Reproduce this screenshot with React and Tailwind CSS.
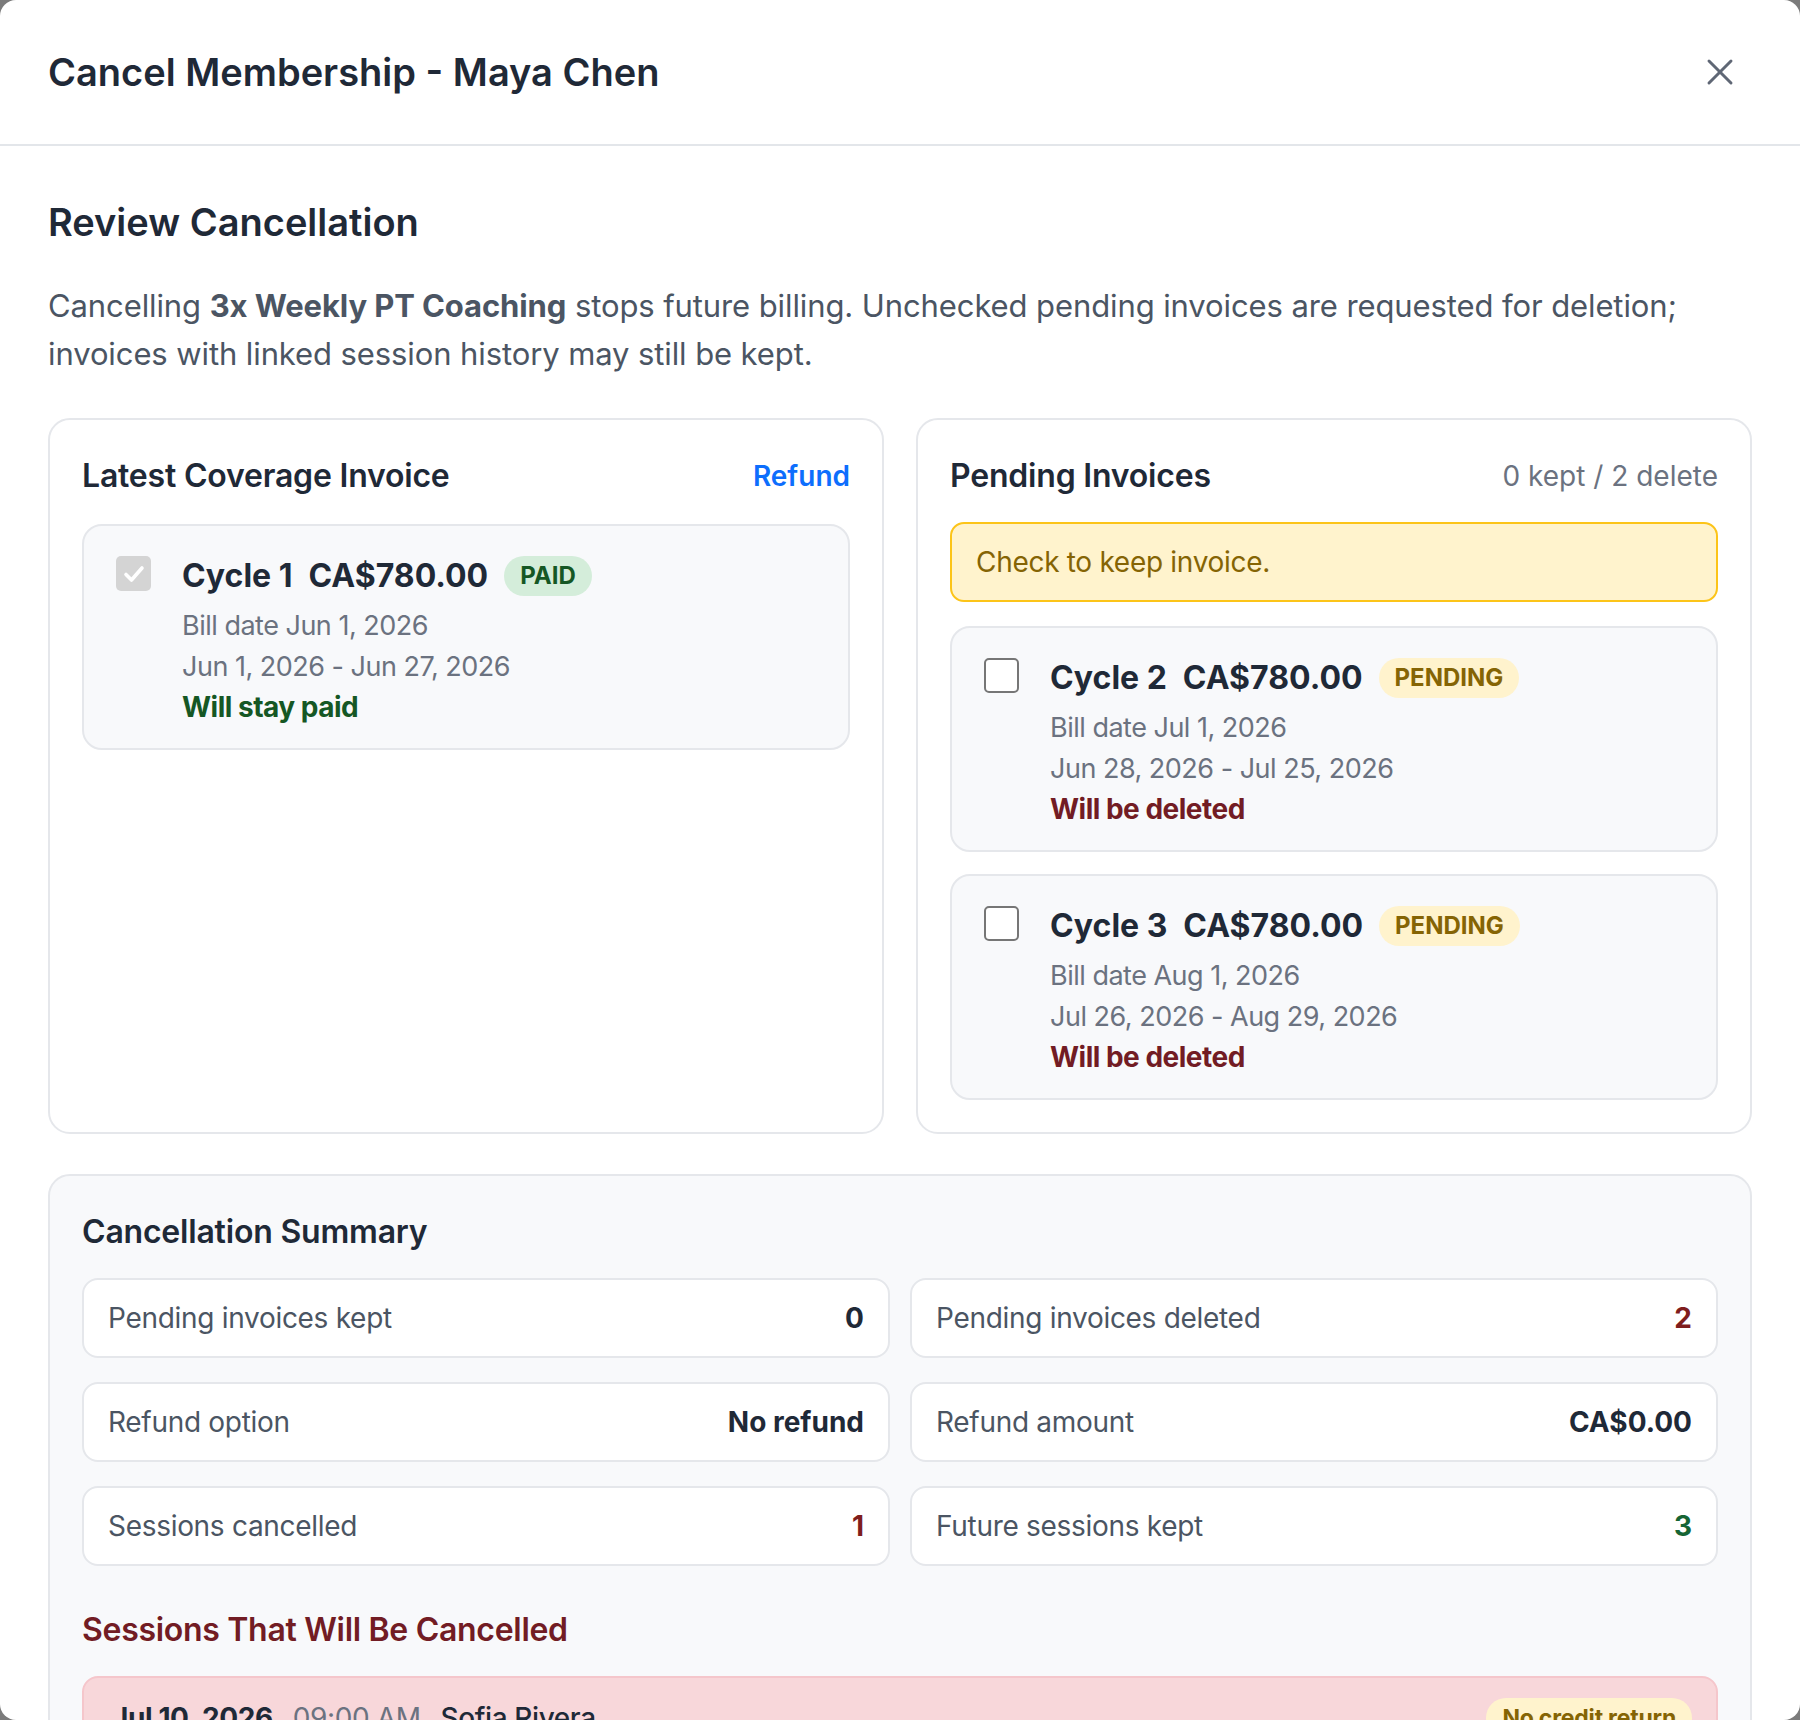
import React from "react";
import { X } from "lucide-react";

const pendingInvoices = [
  {
    cycle: 2,
    amount: "CA$780.00",
    billDate: "Jul 1, 2026",
    range: "Jun 28, 2026 - Jul 25, 2026",
  },
  {
    cycle: 3,
    amount: "CA$780.00",
    billDate: "Aug 1, 2026",
    range: "Jul 26, 2026 - Aug 29, 2026",
  },
];

const summary = [
  { label: "Pending invoices kept", value: "0", tone: "text-[#1f2937]" },
  { label: "Pending invoices deleted", value: "2", tone: "text-[#7f1d1d]" },
  { label: "Refund option", value: "No refund", tone: "text-[#1f2937]" },
  { label: "Refund amount", value: "CA$0.00", tone: "text-[#1f2937]" },
  { label: "Sessions cancelled", value: "1", tone: "text-[#7f1d1d]" },
  { label: "Future sessions kept", value: "3", tone: "text-[#166534]" },
];

function Checkbox({ checked, disabled }) {
  if (checked) {
    return (
      <div
        className={
          "flex h-[35px] w-[35px] items-center justify-center rounded-[5px] " +
          (disabled ? "bg-[#d4d4d4]" : "bg-[#0d6efd]")
        }
      >
        <svg width="26" height="26" viewBox="0 0 26 26" fill="none">
          <path
            d="M5 13.5l5.5 5.5L21 7"
            stroke="white"
            strokeWidth="3.6"
            strokeLinecap="round"
            strokeLinejoin="round"
          />
        </svg>
      </div>
    );
  }
  return (
    <div className="h-[35px] w-[35px] rounded-[5px] border-2 border-[#767676] bg-white" />
  );
}

function Badge({ children, kind, small }) {
  const styles =
    kind === "paid"
      ? "bg-[#d4edda] text-[#155724]"
      : "bg-[#fff3cd] text-[#856404]";
  return (
    <span
      className={
        "inline-flex h-[40px] items-center rounded-full px-[16px] font-bold leading-[32px] " +
        (small ? "text-[23px] tracking-[-0.2px] " : "text-[24px] ") +
        styles
      }
    >
      {children}
    </span>
  );
}

function InvoiceItem({ cycle, amount, billDate, range, status, outcome, outcomeTone, checked, disabled }) {
  return (
    <div className="flex gap-[31px] rounded-[20px] border-2 border-[#e5e7eb] bg-[#f8f9fb] px-[32px] pt-[30px] pb-[20px]">
      <div>
        <Checkbox checked={checked} disabled={disabled} />
      </div>
      <div className="flex flex-col">
        <div className="flex items-center gap-[16px]">
          <span className="text-[32px] font-bold leading-[40px] text-[#1f2937]">
            Cycle {cycle}
          </span>
          <span className="text-[32px] font-bold leading-[40px] text-[#1f2937]">
            {amount}
          </span>
          <Badge kind={status === "PAID" ? "paid" : "pending"}>{status}</Badge>
        </div>
        <div className="mt-[9px] text-[27px] leading-[41px] tracking-[-0.5px] text-[#6b7280]">
          Bill date {billDate}
        </div>
        <div className="text-[27px] leading-[41px] tracking-[-0.5px] text-[#6b7280]">
          {range}
        </div>
        <div
          className={
            "text-[28px] font-bold leading-[41px] tracking-[-0.5px] " + outcomeTone
          }
        >
          {outcome}
        </div>
      </div>
    </div>
  );
}

export default function App() {
  return (
    <div className="h-[1720px] w-full bg-[#7b7b7b] font-[Inter,sans-serif] text-[#1f2937]">
      <div className="flex h-full flex-col overflow-hidden rounded-[16px] bg-white">
        <header className="flex h-[146px] shrink-0 items-center justify-between border-b-2 border-[#e3e6ea] pl-[48px] pr-[56px]">
          <h2 className="text-[38px] font-semibold leading-[48px] text-[#1f2937]">
            Cancel Membership - Maya Chen
          </h2>
          <button className="flex h-[48px] w-[48px] items-center justify-center text-[#5f6775]">
            <X size={44} strokeWidth={1.6} />
          </button>
        </header>

        <main className="flex-1 overflow-hidden px-[48px] pt-[48px]">
          <h3 className="text-[38px] font-semibold leading-[56px] text-[#1f2937]">
            Review Cancellation
          </h3>
          <p className="mt-[32px] text-[31px] leading-[48px] tracking-[-0.1px] text-[#4b5563]">
            Cancelling <span className="font-bold">3x Weekly PT Coaching</span> stops
            future billing. Unchecked pending invoices are requested for deletion; invoices
            with linked session history may still be kept.
          </p>

          <div className="mt-[40px] grid grid-cols-2 gap-[32px]">
            <section className="rounded-[22px] border-2 border-[#e5e7eb] bg-white p-[32px]">
              <div className="flex items-center justify-between">
                <h4 className="text-[32px] font-semibold leading-[48px] tracking-[-0.2px] text-[#1f2937]">
                  Latest Coverage Invoice
                </h4>
                <button className="text-[28px] font-semibold leading-[40px] text-[#0d6efd]">
                  Refund
                </button>
              </div>
              <div className="mt-[24px]">
                <InvoiceItem
                  cycle={1}
                  amount="CA$780.00"
                  billDate="Jun 1, 2026"
                  range="Jun 1, 2026 - Jun 27, 2026"
                  status="PAID"
                  outcome="Will stay paid"
                  outcomeTone="text-[#155724]"
                  checked
                  disabled
                />
              </div>
            </section>

            <section className="rounded-[22px] border-2 border-[#e5e7eb] bg-white p-[32px]">
              <div className="flex items-center justify-between">
                <h4 className="text-[32px] font-semibold leading-[48px] tracking-[-0.2px] text-[#1f2937]">
                  Pending Invoices
                </h4>
                <span className="text-[28px] leading-[40px] text-[#6b7280]">
                  0 kept / 2 delete
                </span>
              </div>
              <div className="mt-[22px] rounded-[14px] border-2 border-[#fcc419] bg-[#fff3cd] px-[24px] py-[18px] text-[28px] leading-[40px] tracking-[-0.3px] text-[#856404]">
                Check to keep invoice.
              </div>
              <div className="mt-[24px] flex flex-col gap-[22px]">
                {pendingInvoices.map((inv) => (
                  <InvoiceItem
                    key={inv.cycle}
                    {...inv}
                    status="PENDING"
                    outcome="Will be deleted"
                    outcomeTone="text-[#721c24]"
                  />
                ))}
              </div>
            </section>
          </div>

          <section className="mt-[40px] rounded-[22px] border-2 border-[#e5e7eb] bg-[#f8f9fb] px-[32px] pt-[32px] pb-[40px]">
            <h4 className="text-[32px] font-semibold leading-[48px] tracking-[-0.2px] text-[#1f2937]">
              Cancellation Summary
            </h4>
            <div className="mt-[22px] grid grid-cols-2 gap-x-[20px] gap-y-[24px]">
              {summary.map((row) => (
                <div
                  key={row.label}
                  className="flex h-[80px] items-center justify-between rounded-[16px] border-2 border-[#e5e7eb] bg-white px-[24px]"
                >
                  <span className="text-[28px] tracking-[-0.3px] text-[#4b5563]">
                    {row.label}
                  </span>
                  <span className={"text-[28px] font-bold " + row.tone}>{row.value}</span>
                </div>
              ))}
            </div>

            <h4 className="mt-[40px] text-[32px] font-semibold leading-[48px] tracking-[-0.3px] text-[#721c24]">
              Sessions That Will Be Cancelled
            </h4>
            <div className="mt-[22px] flex items-center justify-between rounded-[16px] border-2 border-[#f5c6cb] bg-[#f8d7da] py-[20px] pl-[28px] pr-[24px]">
              <div className="flex items-center gap-[20px] text-[28px] leading-[40px] tracking-[-0.4px]">
                <span className="font-bold text-[#1f2937]">Jul 10, 2026</span>
                <span className="text-[#6b7280]">09:00 AM</span>
                <span className="font-medium text-[#1f2937]">Sofia Rivera</span>
              </div>
              <Badge kind="pending" small>
                No credit return
              </Badge>
            </div>
          </section>
        </main>
      </div>
    </div>
  );
}
